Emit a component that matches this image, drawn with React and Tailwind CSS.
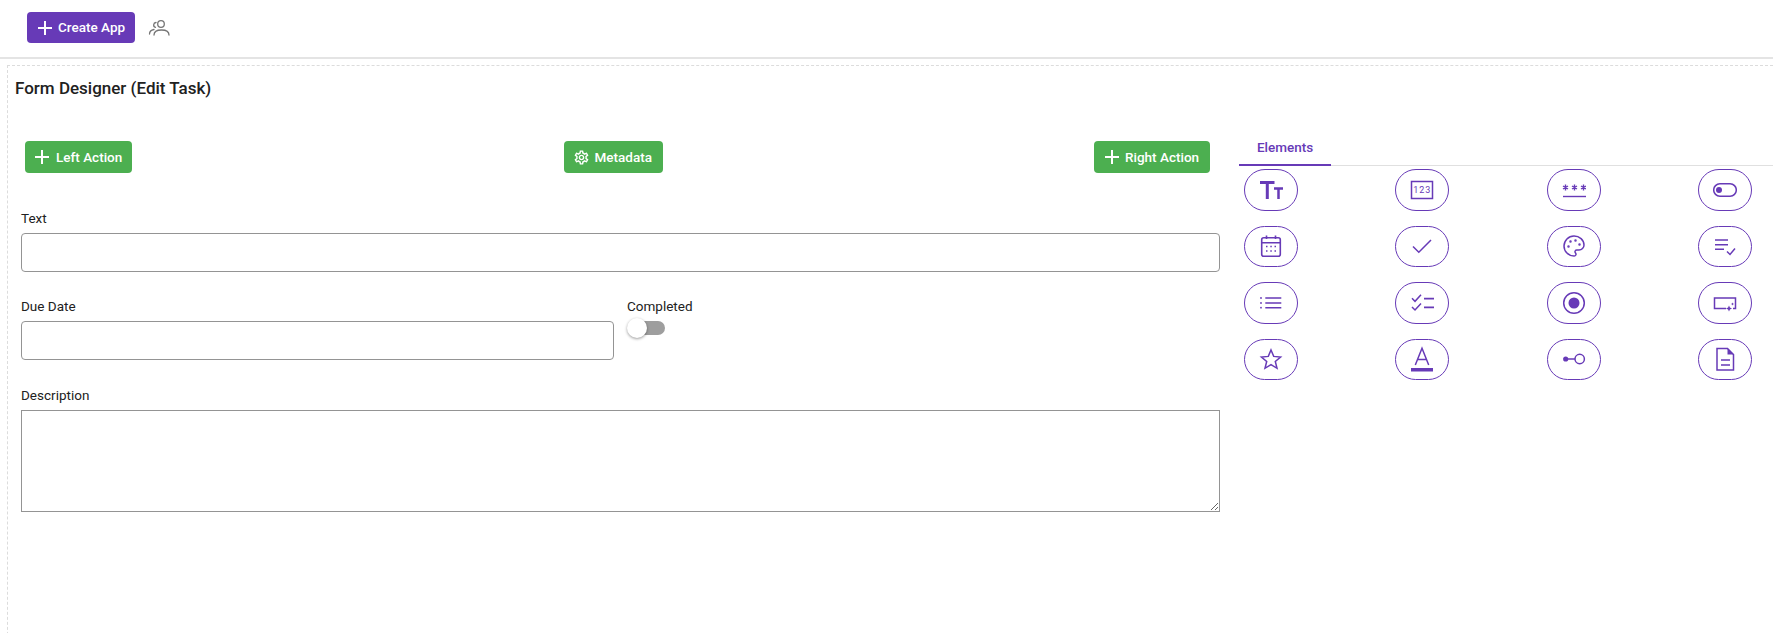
import { MdAdd, MdOutlineSettings } from "react-icons/md";
import { Palette } from "lucide-react";

const Ico = ({ children, h = 24, sw = 1.5 }) => (
  <svg
    width="24"
    height={h}
    viewBox={`0 0 24 ${h}`}
    fill="none"
    stroke="#673ab7"
    strokeWidth={sw}
  >
    {children}
  </svg>
);

const UsersIcon = () => (
  <svg width="22" height="22" viewBox="0 0 22 22" fill="none" stroke="#757575" strokeWidth="1.3" strokeLinecap="round">
    <circle cx="13" cy="8" r="3.3" />
    <path d="M6 19c0-3 3-5 7.500-5s7.500 2 7.500 5" />
    <path d="M8 6.500a2.500 2.500 0 0 0-.5 4.900M1.500 18c0-2.500 1.800-4 4.500-4.500" />
  </svg>
);

const elements = [
  <Ico>
    <path d="M1 4.500h14.500M8.300 4.500V21" strokeWidth="3" />
    <path d="M15 10.500h9M19.500 10.500V21" strokeWidth="2.500" />
  </Ico>,
  <Ico>
    <rect x="1.500" y="3.500" width="21" height="17" />
    <text x="12.300" y="15.300" textAnchor="middle" fontSize="9" letterSpacing="1" fill="#673ab7" stroke="none" fontFamily="Roboto, sans-serif">
      123
    </text>
  </Ico>,
  <Ico sw={1.4}>
    <path d="M3.500 6.500v6M1 8l5 3M6 8l-5 3M12.500 6.500v6M10 8l5 3M15 8l-5 3M21.500 6.500v6M19 8l5 3M24 8l-5 3" />
    <path d="M1 18.500h23" />
  </Ico>,
  <Ico>
    <rect x="0.700" y="5.800" width="22.600" height="12.400" rx="6.200" />
    <circle cx="6" cy="12" r="3" fill="#673ab7" stroke="none" />
  </Ico>,
  <Ico sw={1.6}>
    <rect x="2.700" y="3.700" width="18.600" height="18.600" rx="2" />
    <path d="M2.700 8.700h18.600M7.500 1.500v3.500M16.500 1.500v3.500" />
    <path d="M7 12.500h1.500M11.300 12.500h1.500M15.500 12.500h1.500M7 17h1.500M11.300 17h1.500M15.500 17h1.500" strokeWidth="1.700" />
  </Ico>,
  <Ico>
    <path d="M3 12.500l5.800 5.800L21 6" />
  </Ico>,
  <Palette size={24} color="#673ab7" strokeWidth={1.5} />,
  <Ico>
    <path d="M2 6h13M2 10.700h13M2 15.300h9M14 17.500l3 3 5-6" />
  </Ico>,
  <Ico>
    <path d="M6.300 7h16M6.300 12h16M6.300 16.700h16" />
    <circle cx="2" cy="7" r="0.900" fill="#673ab7" stroke="none" />
    <circle cx="2" cy="12" r="0.900" fill="#673ab7" stroke="none" />
    <circle cx="2" cy="16.700" r="0.900" fill="#673ab7" stroke="none" />
  </Ico>,
  <Ico>
    <path d="M2 7.300l3 3 6-6.600M2 16l3 3 6-6.600" />
    <path d="M14 7.700h10M14 16.300h10" strokeWidth="1.700" />
  </Ico>,
  <Ico>
    <circle cx="12" cy="12" r="10.300" />
    <circle cx="12" cy="12" r="5.500" fill="#673ab7" stroke="none" />
  </Ico>,
  <Ico>
    <path d="M13 17.500H1.500V7h21v10.500H20" />
    <path d="M16 14.500l.9 2.100 2.100.9-2.100.9-.9 2.100-.9-2.100-2.100-.9 2.100-.9zM19.500 11.500l.5 1 1 .5-1 .5-.5 1-.5-1-1-.5 1-.5z" fill="#673ab7" stroke="none" />
  </Ico>,
  <Ico>
    <path d="M12 3l2.700 6.400 6.900.6-5.300 4.500 1.700 6.800-6-3.600-6 3.600 1.700-6.800L2.400 10l6.900-.6z" />
  </Ico>,
  <Ico h={28} sw={1.5}>
    <path d="M5.300 20L12 3.300 18.700 20M7.700 14.500h8.600" />
    <rect x="1" y="23" width="22" height="3.500" fill="#673ab7" stroke="none" />
  </Ico>,
  <Ico>
    <circle cx="3.700" cy="12" r="2.600" fill="#673ab7" stroke="none" />
    <path d="M5 12h8" />
    <circle cx="17.700" cy="12" r="4.700" />
  </Ico>,
  <Ico>
    <path d="M4 1.500h10.500l6 6V23H4z" />
    <path d="M14.500 1.500l6 6h-6z" fill="#673ab7" stroke="none" />
    <path d="M8 13h9M8 18h9" />
  </Ico>,
];

const ActionButton = ({ icon, children, className }) => (
  <button
    className={`flex h-[32px] items-center rounded-[4px] bg-[#4caf50] text-[13.500px] font-medium text-white ${className}`}
  >
    {icon}
    {children}
  </button>
);

const Label = ({ children }) => (
  <label className="mb-[5px] block text-[13.500px] leading-[20px] text-[#212121]">{children}</label>
);

const App = () => {
  return (
    <div className="h-[633px] w-[1773px] overflow-hidden bg-white font-['Roboto',sans-serif]">
      <div className="flex h-[59px] items-start gap-[13px] border-b-2 border-[#e4e4e4] pl-[27px] pt-[12px]">
        <button className="flex h-[31px] w-[108px] items-center gap-[1px] rounded-[4px] bg-[#673ab7] pl-[6px] text-[13.500px] font-medium text-white">
          <MdAdd size={24} />
          Create App
        </button>
        <div className="pt-[4px]">
          <UsersIcon />
        </div>
      </div>

      <div className="ml-[7px] mt-[6px] h-[600px] border-l border-t border-dashed border-[#dcdcdc]">
        <h1 className="pl-[7px] pt-[10px] text-[17px] font-medium leading-[24px] text-[#212121]">
          Form Designer (Edit Task)
        </h1>

        <div className="flex pt-[41px]">
          <div className="ml-[13px] w-[1199px]">
            <div className="flex items-center justify-between pl-[4px] pr-[10px]">
              <ActionButton icon={<MdAdd size={24} />} className="w-[107px] gap-[2px] pl-[5px]">
                Left Action
              </ActionButton>
              <ActionButton icon={<MdOutlineSettings size={17} />} className="w-[99px] gap-[5px] pl-[9px]">
                Metadata
              </ActionButton>
              <ActionButton icon={<MdAdd size={24} />} className="w-[116px] gap-[1px] pl-[6px]">
                Right Action
              </ActionButton>
            </div>

            <div className="mt-[35px]">
              <Label>Text</Label>
              <input className="block h-[39px] w-full rounded-[4px] border border-[#949494] bg-white" />
            </div>

            <div className="mt-[24px] flex gap-[13px]">
              <div className="w-[593px]">
                <Label>Due Date</Label>
                <input className="block h-[39px] w-full rounded-[4px] border border-[#949494] bg-white" />
              </div>
              <div>
                <label className="block text-[13.500px] leading-[20px] text-[#212121]">Completed</label>
                <div className="relative mt-[2px] h-[20px] w-[38px]">
                  <div className="absolute left-[4px] top-[3px] h-[14px] w-[34px] rounded-full bg-[#9e9e9e]" />
                  <div className="absolute left-0 top-0 h-[20px] w-[20px] rounded-full bg-white shadow-[0_1px_3px_rgba(0,0,0,0.4)]" />
                </div>
              </div>
            </div>

            <div className="mt-[25px]">
              <Label>Description</Label>
              <textarea className="block h-[102px] w-full border border-[#949494] bg-white" />
            </div>
          </div>

          <div className="ml-[19px] flex-1">
            <div className="h-[25px] border-b border-[#e0e0e0]">
              <div className="h-[25px] w-[92px] border-b-2 border-[#673ab7] text-center text-[13.500px] font-medium leading-[12px] text-[#673ab7]">
                Elements
              </div>
            </div>
            <div className="ml-[5px] mt-[3px] grid w-[508px] grid-cols-[54px_54px_54px_54px] justify-between gap-y-[15px]">
              {elements.map((icon, i) => (
                <div
                  key={i}
                  className="flex h-[41.500px] items-center justify-center rounded-[21px] border border-[#673ab7] text-[#673ab7]"
                >
                  {icon}
                </div>
              ))}
            </div>
          </div>
        </div>
      </div>
    </div>
  );
};

export default App;
